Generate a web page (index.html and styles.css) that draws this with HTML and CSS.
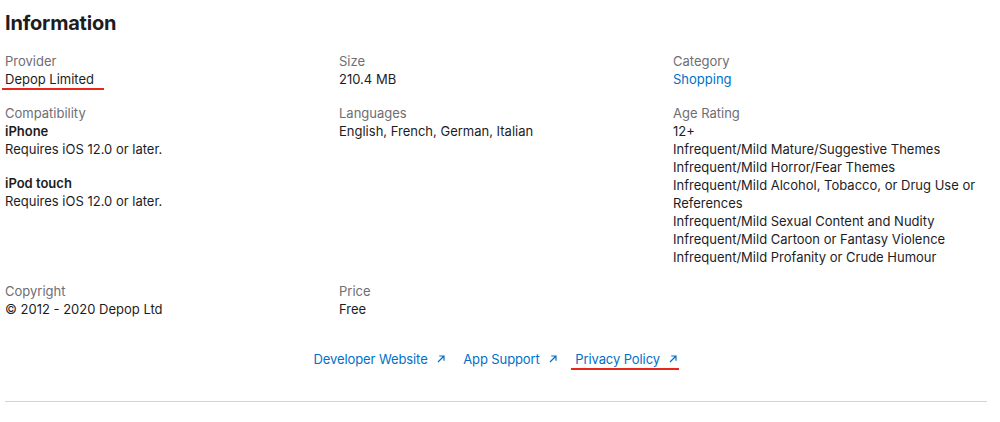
FILE: index.html
```html
<!DOCTYPE html>
<html lang="en">
<head>
    <meta charset="UTF-8">
    <meta name="viewport" content="width=device-width, initial-scale=1.0">
    <title>Information</title>
    <link rel="stylesheet" href="styles.css">
</head>
<body>
    <section class="information">
        <h2>Information</h2>

        <dl class="info-grid">
            <div class="info-item">
                <dt>Provider</dt>
                <dd><span class="marked provider">Depop Limited</span></dd>
            </div>
            <div class="info-item">
                <dt>Size</dt>
                <dd>210.4 MB</dd>
            </div>
            <div class="info-item">
                <dt>Category</dt>
                <dd><a href="#">Shopping</a></dd>
            </div>

            <div class="info-item">
                <dt>Compatibility</dt>
                <dd>
                    <div class="device">
                        <strong>iPhone</strong>
                        <p>Requires iOS 12.0 or later.</p>
                    </div>
                    <div class="device">
                        <strong>iPod touch</strong>
                        <p>Requires iOS 12.0 or later.</p>
                    </div>
                </dd>
            </div>
            <div class="info-item">
                <dt>Languages</dt>
                <dd>English, French, German, Italian</dd>
            </div>
            <div class="info-item">
                <dt>Age Rating</dt>
                <dd>
                    <p>12+</p>
                    <ul class="ratings">
                        <li>Infrequent/Mild Mature/Suggestive Themes</li>
                        <li>Infrequent/Mild Horror/Fear Themes</li>
                        <li>Infrequent/Mild Alcohol, Tobacco, or Drug Use or References</li>
                        <li>Infrequent/Mild Sexual Content and Nudity</li>
                        <li>Infrequent/Mild Cartoon or Fantasy Violence</li>
                        <li>Infrequent/Mild Profanity or Crude Humour</li>
                    </ul>
                </dd>
            </div>

            <div class="info-item">
                <dt>Copyright</dt>
                <dd>© 2012 - 2020 Depop Ltd</dd>
            </div>
            <div class="info-item">
                <dt>Price</dt>
                <dd>Free</dd>
            </div>
        </dl>

        <ul class="links">
            <li><a href="#">Developer Website <svg class="ext" viewBox="0 0 10 10"><path d="M2 8 L8 2 M3.2 2 H8 V6.8"/></svg></a></li>
            <li><a href="#">App Support <svg class="ext" viewBox="0 0 10 10"><path d="M2 8 L8 2 M3.2 2 H8 V6.8"/></svg></a></li>
            <li><a href="#" class="marked privacy">Privacy Policy <svg class="ext" viewBox="0 0 10 10"><path d="M2 8 L8 2 M3.2 2 H8 V6.8"/></svg></a></li>
        </ul>
    </section>
</body>
</html>
```

FILE: styles.css
```css
body {
    margin: 0;
    padding: 0 13px 0 5px;
    background: #fff;
    color: #1d1d1f;
    font-family: Inter, "Liberation Sans", sans-serif;
    font-size: 13px;
    line-height: 18px;
}
h2 {
    margin: 0;
    padding-top: 11px;
    font-size: 20px;
    line-height: 24px;
    font-weight: 700;
    letter-spacing: -0.2px;
}
a {
    color: #0070c9;
    text-decoration: none;
}
p {
    margin: 0;
}
.info-grid {
    display: grid;
    grid-template-columns: repeat(3, 1fr);
    column-gap: 20px;
    row-gap: 16px;
    margin: 17px 0 0;
}
.info-item dt {
    color: #6e6e73;
}
.info-item dd {
    margin: 0;
}
.device + .device {
    margin-top: 16px;
}
.device strong {
    display: block;
    font-weight: 600;
}
.ratings {
    list-style: none;
    margin: 0;
    padding: 0;
}
.links {
    list-style: none;
    display: flex;
    justify-content: center;
    gap: 17px;
    margin: 32px 0 0;
    padding: 0 0 33px;
    border-bottom: 1px solid #d2d2d7;
}
.links a {
    letter-spacing: -0.1px;
}
.ext {
    width: 10px;
    height: 10px;
    margin-left: 5px;
    fill: none;
    stroke: #0070c9;
    stroke-width: 1.2;
}
.marked {
    position: relative;
}
.marked::after {
    content: "";
    position: absolute;
    bottom: -3px;
    height: 2px;
    background: #e8261c;
}
.provider::after {
    left: -3px;
    right: -10px;
}
.privacy::after {
    left: -4px;
    right: -1px;
}
```
